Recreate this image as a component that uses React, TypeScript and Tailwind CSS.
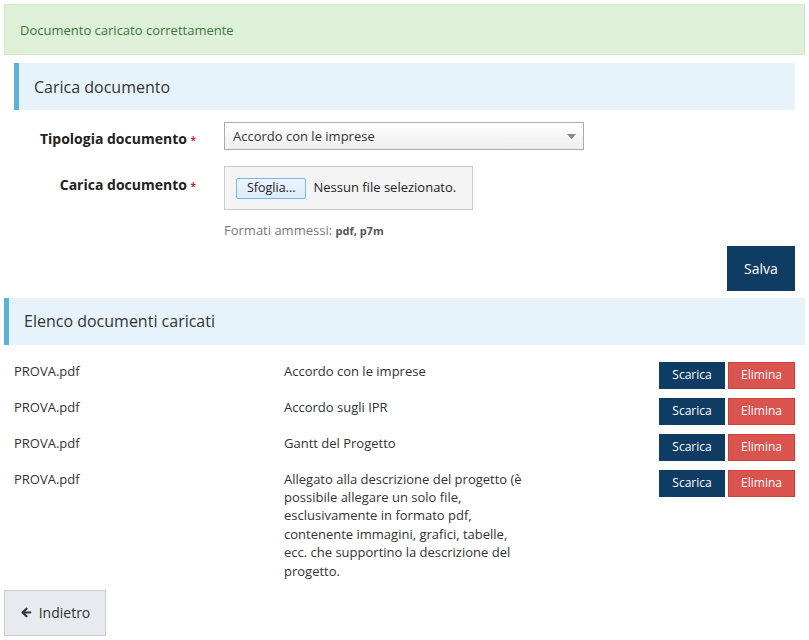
import React from 'react';
import { ArrowLeft } from 'lucide-react';

const documents = [
  { file: 'PROVA.pdf', type: 'Accordo con le imprese' },
  { file: 'PROVA.pdf', type: 'Accordo sugli IPR' },
  { file: 'PROVA.pdf', type: 'Gantt del Progetto' },
  {
    file: 'PROVA.pdf',
    type: 'Allegato alla descrizione del progetto (è possibile allegare un solo file, esclusivamente in formato pdf, contenente immagini, grafici, tabelle, ecc. che supportino la descrizione del progetto.',
  },
];

function SectionHeader({ title, className }: { title: string; className?: string }) {
  return (
    <div className={`flex h-[47px] items-center border-l-[5px] border-[#5bb1dc] bg-[#e7f3fb] pl-[15px] ${className ?? ''}`}>
      <h3 className="text-[16px] font-normal text-[#333]">{title}</h3>
    </div>
  );
}

export default function App() {
  return (
    <div className="w-[809px] bg-white pb-[4px] font-['Open_Sans',sans-serif] text-[13px] text-[#333]">
      <div className="mx-[4px] pt-[4px]">
        <div className="flex h-[51px] items-center border border-[#d6e9c6] bg-[#dff0d8] pl-[15px] pt-[2px] text-[#3c763d]">
          Documento caricato correttamente
        </div>
      </div>

      <div className="mt-[8px] pl-[14px] pr-[14px]">
        <SectionHeader title="Carica documento" />

        <div className="mt-[12px] flex items-center">
          <label className="w-[210px] pr-[28px] pt-[4px] text-right text-[14px] font-bold text-[#222]">
            Tipologia documento <span className="text-[10px] text-[#c9302c]">*</span>
          </label>
          <div className="relative flex h-[28px] w-[360px] items-center border border-[#aaa] bg-gradient-to-b from-white to-[#eee] pl-[8px] pt-[1px]">
            Accordo con le imprese
            <svg className="absolute right-[7px] top-[11px]" width="9" height="5" viewBox="0 0 9 5">
              <path d="M0 0h9L4.5 5z" fill="#888" />
            </svg>
          </div>
        </div>

        <div className="mt-[16px] flex items-start">
          <label className="mt-[8px] w-[210px] pr-[28px] text-right text-[14px] font-bold text-[#222]">
            Carica documento <span className="text-[10px] text-[#c9302c]">*</span>
          </label>
          <div className="flex h-[44px] w-[249px] items-center border border-[#ccc] bg-[#f4f4f4] pl-[11px]">
            <span className="flex h-[21px] items-center rounded-[2px] border border-[#7eb4ea] bg-gradient-to-b from-[#ecf4fc] to-[#dcecfc] px-[10px] text-[12.5px] text-[#222]">
              Sfoglia...
            </span>
            <span className="ml-[7px] text-[#222]">Nessun file selezionato.</span>
          </div>
        </div>

        <p className="mt-[11px] pl-[210px] text-[13px] text-[#777]">
          Formati ammessi: <b className="text-[11px] text-[#555]">pdf, p7m</b>
        </p>

        <div className="mt-[5px] flex justify-end">
          <button className="h-[45px] w-[68px] bg-[#0f3c62] text-[14px] text-white">Salva</button>
        </div>
      </div>

      <div className="mx-[4px] mt-[7px]">
        <SectionHeader title="Elenco documenti caricati" />

        <div className="mt-[17px] flex flex-col gap-[9px] pl-[10px] pr-[10px]">
          {documents.map((doc, i) => (
            <div key={i} className="flex items-start">
              <div className="w-[270px] leading-[18px]">{doc.file}</div>
              <div className="w-[248px] leading-[18.4px]">{doc.type}</div>
              <div className="ml-auto flex gap-[3px]">
                <button className="h-[27px] w-[66px] bg-[#0f3c62] text-[12px] text-white">Scarica</button>
                <button className="h-[27px] w-[67px] border border-[#d43f3a] bg-[#d9534f] text-[12px] text-white">Elimina</button>
              </div>
            </div>
          ))}
        </div>

        <button className="mt-[10px] flex h-[46px] w-[102px] items-center justify-center gap-[6px] border border-[#ccc] bg-[#e7ebef] text-[14px] text-[#333]">
          <ArrowLeft size={13} strokeWidth={4} />
          Indietro
        </button>
      </div>
    </div>
  );
}
